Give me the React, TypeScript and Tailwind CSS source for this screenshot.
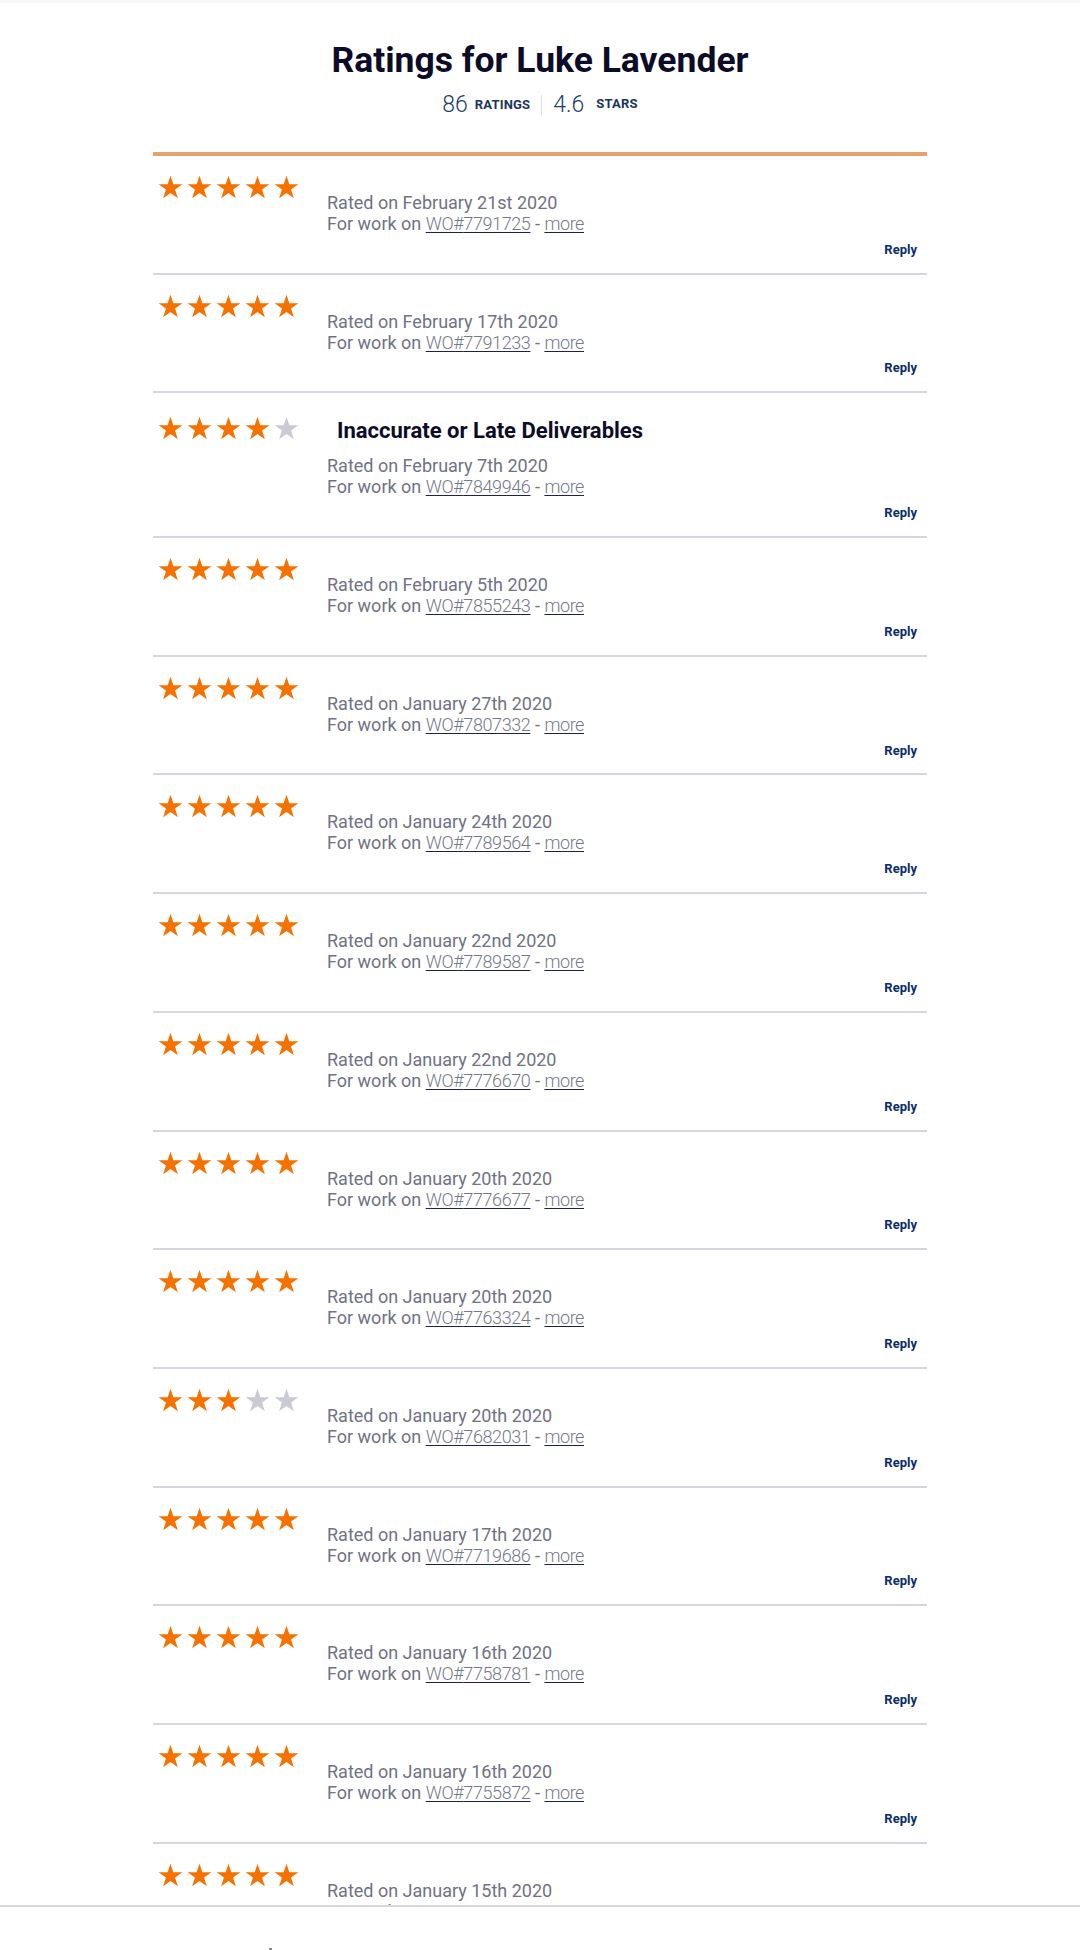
import React from 'react';

type Rating = {
  stars: number;
  date: string;
  wo: string;
  title?: string;
};

const ratings: Rating[] = [
  { stars: 5, date: 'February 21st 2020', wo: '7791725' },
  { stars: 5, date: 'February 17th 2020', wo: '7791233' },
  { stars: 4, date: 'February 7th 2020', wo: '7849946', title: 'Inaccurate or Late Deliverables' },
  { stars: 5, date: 'February 5th 2020', wo: '7855243' },
  { stars: 5, date: 'January 27th 2020', wo: '7807332' },
  { stars: 5, date: 'January 24th 2020', wo: '7789564' },
  { stars: 5, date: 'January 22nd 2020', wo: '7789587' },
  { stars: 5, date: 'January 22nd 2020', wo: '7776670' },
  { stars: 5, date: 'January 20th 2020', wo: '7776677' },
  { stars: 5, date: 'January 20th 2020', wo: '7763324' },
  { stars: 3, date: 'January 20th 2020', wo: '7682031' },
  { stars: 5, date: 'January 17th 2020', wo: '7719686' },
  { stars: 5, date: 'January 16th 2020', wo: '7758781' },
  { stars: 5, date: 'January 16th 2020', wo: '7755872' },
  { stars: 5, date: 'January 15th 2020', wo: '7731875' },
  { stars: 5, date: 'January 14th 2020', wo: '7729410' },
];

// five-point star, sharp tips
function Star({ filled }: { filled: boolean }) {
  return (
    <svg width="25" height="25" viewBox="0 0 24 24" className="shrink-0">
      <polygon
        points="12,0.6 14.7,8.88 23.41,8.89 16.37,14.02 19.05,22.31 12,17.2 4.95,22.31 7.63,14.02 0.59,8.89 9.3,8.88"
        fill={filled ? '#f57100' : '#c9cad3'}
      />
    </svg>
  );
}

function StarRow({ value }: { value: number }) {
  return (
    <div className="flex gap-[4px]">
      {[1, 2, 3, 4, 5].map((n) => (
        <Star key={n} filled={n <= value} />
      ))}
    </div>
  );
}

function RatingRow({ rating }: { rating: Rating }) {
  return (
    <div className="flex border-b-2 border-[#d6d7de] pt-5 pb-[9.7px]">
      <div className={rating.title ? 'w-[174px] shrink-0 pl-[5px] mt-[3px]' : 'w-[174px] shrink-0 pl-[5px] -mt-[1px]'}>
        <StarRow value={rating.stars} />
      </div>
      <div className={rating.title ? 'flex flex-1 flex-col' : 'flex flex-1 flex-col pt-[16px]'}>
        {rating.title && (
          <h3 className="mt-1 mb-[10px] pl-[10px] text-[22px] leading-[28px] font-bold text-[#0c0c28]">
            {rating.title}
          </h3>
        )}
        <div className="text-[18px] leading-[21px] text-[#707285]">
          <div>Rated on {rating.date}</div>
          <div>
            For work on{' '}
            <a href="#" className="font-light tracking-[-0.4px] text-[#75778a] underline decoration-[#1c2150] underline-offset-2">
              WO#{rating.wo}
            </a>{' '}
            -{' '}
            <a href="#" className="font-light tracking-[-0.4px] text-[#75778a] underline decoration-[#1c2150] underline-offset-2">
              more
            </a>
          </div>
        </div>
        <div className="mt-[2px] flex justify-end pr-[4px]">
          <button className="h-[27px] px-[6px] text-[13px] font-bold text-[#0a2d6b]">Reply</button>
        </div>
      </div>
    </div>
  );
}

export default function App() {
  return (
    <div className="flex h-[1950px] flex-col overflow-hidden bg-white font-['Roboto',sans-serif]">
      <div className="h-[3px] bg-[#f8f8f8]" />
      <main className="flex-1 overflow-hidden">
        <div className="mx-auto w-[774px]">
          <header className="flex flex-col items-center pt-[35px]">
            <h1 className="text-[35.5px] leading-[44px] font-bold text-[#0c0c28]">Ratings for Luke Lavender</h1>
            <div className="mt-[9px] flex items-center text-[#21406a]">
              <span className="text-[23px] leading-[28px] font-light">86</span>
              <span className="ml-[7px] text-[13px] font-bold tracking-[0.2px] text-[#1b355c]">RATINGS</span>
              <span className="mx-[11px] h-[20px] w-px bg-[#dcdde2]" />
              <span className="text-[23px] leading-[28px] font-light">4.6</span>
              <span className="ml-[12px] -mt-[3px] text-[13px] font-bold tracking-[0.2px] text-[#1b355c]">STARS</span>
            </div>
          </header>
          <div className="mt-[33px] h-1 bg-[#e9a16b]" />
          {ratings.map((r, i) => (
            <RatingRow key={i} rating={r} />
          ))}
        </div>
      </main>
      <footer className="relative h-[45px] shrink-0 border-t-2 border-[#d8d8dc] bg-white">
        <span className="absolute left-[269px] bottom-0 h-[2px] w-[3px] bg-[#8a8a95]" />
      </footer>
    </div>
  );
}
